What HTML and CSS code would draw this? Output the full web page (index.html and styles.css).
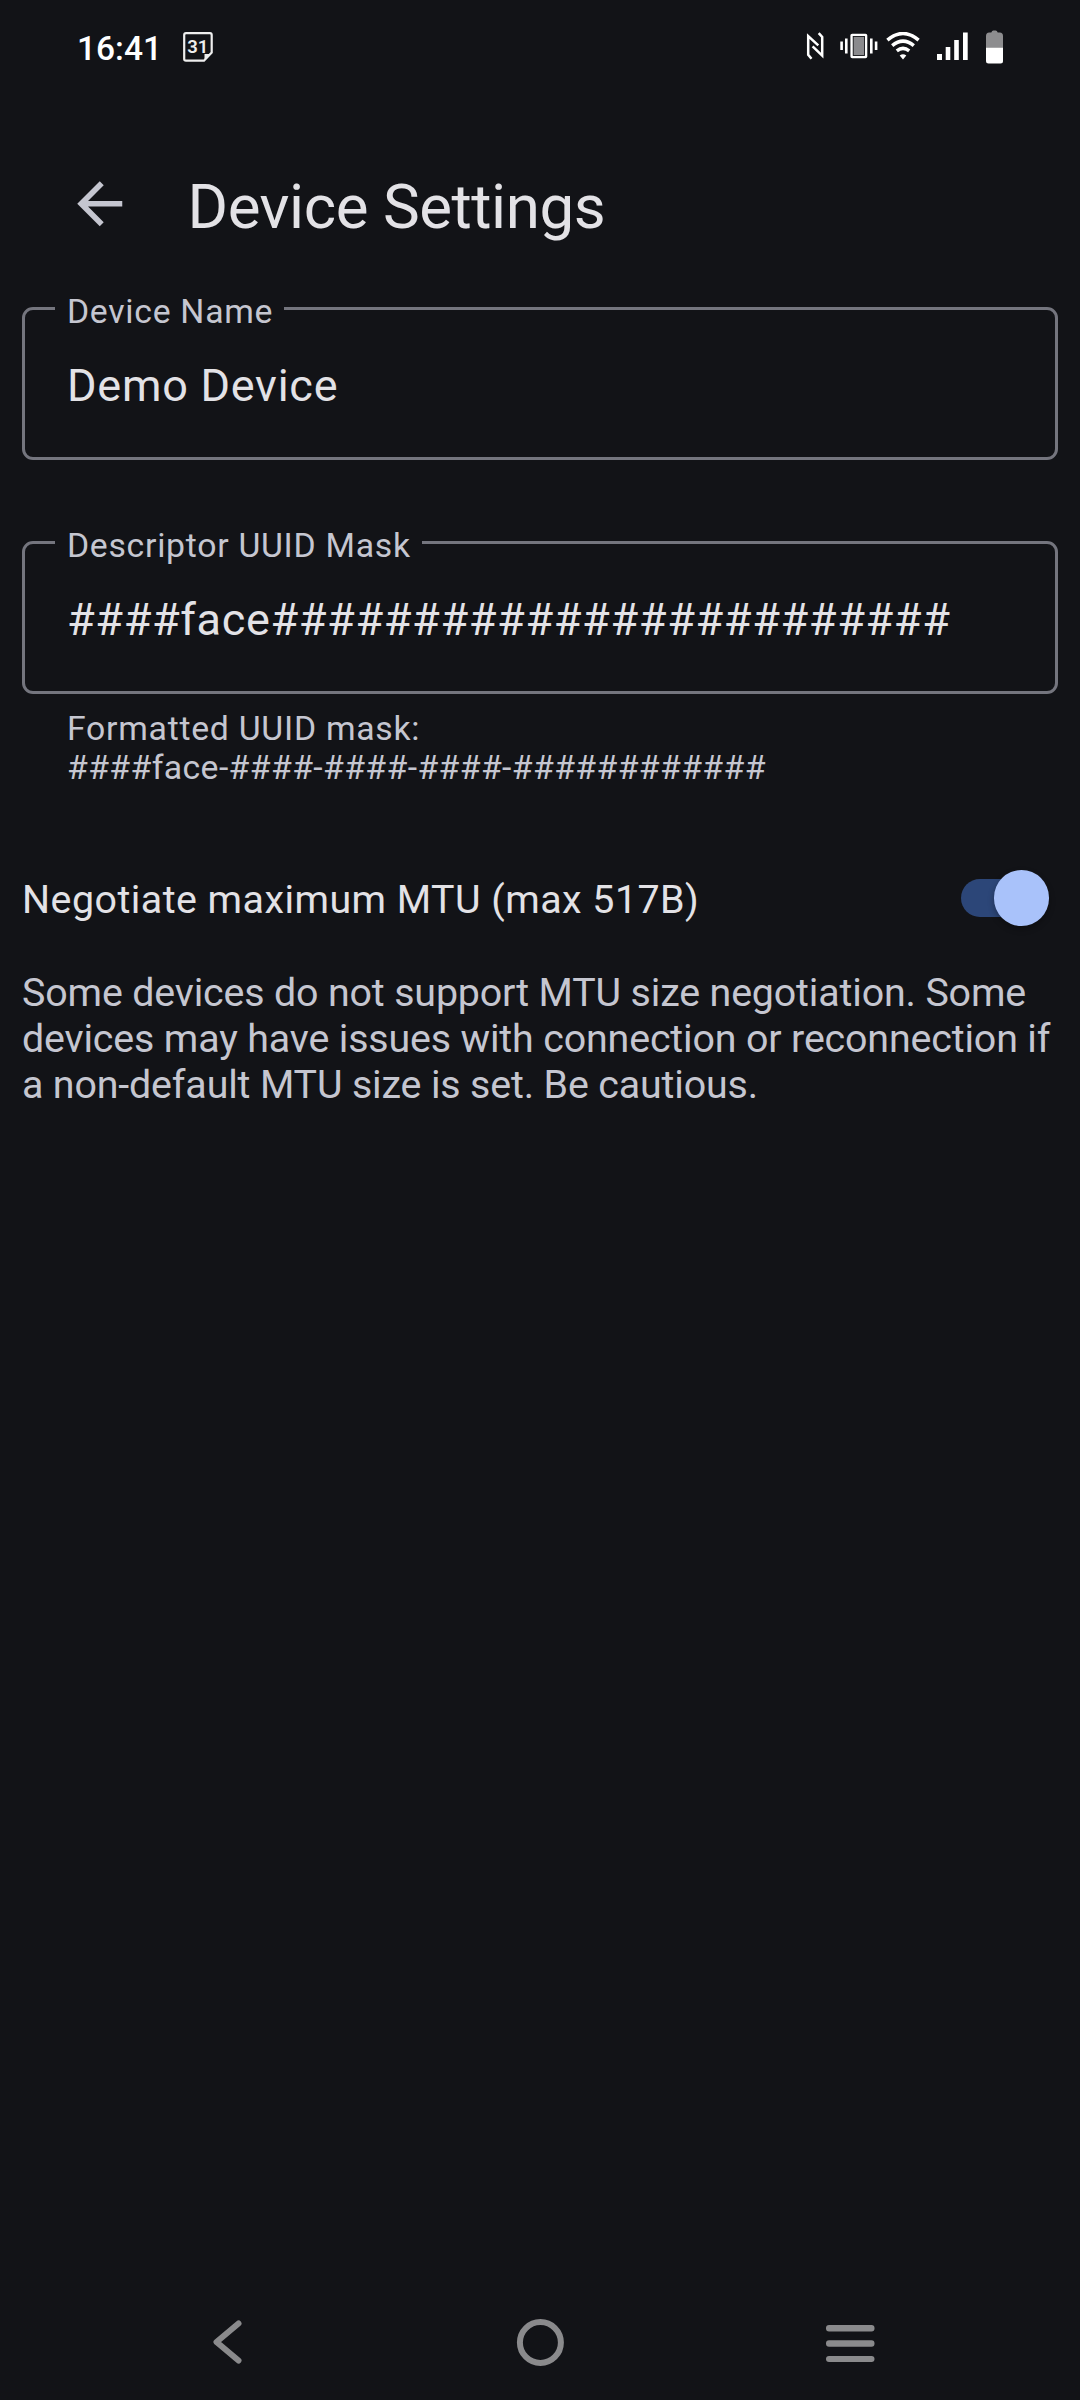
FILE: index.html
```
<!DOCTYPE html>
<html lang="en">
<head>
<meta charset="utf-8">
<title>Device Settings</title>
<link rel="stylesheet" href="styles.css">
</head>
<body>
<div class="screen">
  <div class="status">
    <span class="clock">16:41</span>
    <svg class="calendar" width="32" height="32" viewBox="0 0 32 32">
      <path d="M4 2.2H28Q29.7 2.2 29.7 4V21.5L22 29.7H4Q2.2 29.7 2.2 28V4Q2.2 2.2 4 2.2Z" fill="none" stroke="#eee" stroke-width="2.2"/>
      <path d="M22.5 29V23H29Z" fill="#eee"/>
      <text x="15.8" y="22.3" text-anchor="middle" class="day">31</text>
    </svg>
    <div class="indicators">
      <svg width="18" height="28" viewBox="0 0 18 28" fill="none" stroke="#fff" stroke-width="2.5">
        <path d="M5.5 26.8L2.2 22.8V4L12.3 13.4"/>
        <path d="M12.7 1.2L16.2 5V23.6L6.6 14.4"/>
      </svg>
      <svg class="vibrate" width="38" height="28" viewBox="0 0 38 28">
        <path d="M1.6 9.5V18M6.3 6.5V21.5M31.3 6.5V21.5M36.1 9.5V18" stroke="#fff" stroke-width="2.6"/>
        <rect x="11.7" y="3" width="14.3" height="22" rx=".5" fill="#8a8a8d" stroke="#fff" stroke-width="2.6"/>
        <rect x="13.2" y="4.5" width="11.3" height="19" fill="none" stroke="#17181b" stroke-width=".9"/>
      </svg>
      <svg class="wifi" width="34" height="28" viewBox="0 0 34 28" fill="none" stroke="#fff" stroke-width="3.5">
        <path d="M1.4 8.2Q17-5.2 32.6 8.2"/>
        <path d="M6.2 13.7Q17 4.6 27.8 13.7"/>
        <path d="M10.8 18.8Q17 13.9 23.2 18.8"/>
        <path d="M13.7 23.6Q17 21 20.3 23.6L17 27.6Z" fill="#fff" stroke="none"/>
      </svg>
      <svg class="signal" width="31" height="28" viewBox="0 0 31 28" fill="#fff">
        <path d="M0 22H5V28H0ZM8.7 15H13.3V28H8.7ZM17.2 8H21.8V28H17.2ZM26 .5H30.7V28H26Z"/>
      </svg>
      <svg class="battery" width="17" height="34" viewBox="0 0 17 34">
        <path d="M0 17.5V6Q0 2.6 3.2 2.4H5.3Q6 .6 7.3.6H9.7Q11 .6 11.7 2.4H13.8Q17 2.6 17 6V17.5Z" fill="#8d8d8f"/>
        <path d="M0 17.5H17V31Q17 33.5 14.5 33.5H2.5Q0 33.5 0 31Z" fill="#fff"/>
      </svg>
    </div>
  </div>

  <header class="appbar">
    <svg width="67.5" height="67.5" viewBox="0 0 24 24" fill="#c5c6d0">
      <path d="M20 11H7.83l5.59-5.59L12 4l-8 8 8 8 1.41-1.41L7.83 13H20v-2z"/>
    </svg>
    <h1 class="title">Device Settings</h1>
  </header>

  <main class="content">
    <fieldset class="field">
      <legend>Device Name</legend>
      <div class="value">Demo Device</div>
    </fieldset>
    <fieldset class="field field-mask">
      <legend>Descriptor UUID Mask</legend>
      <div class="value">####face########################</div>
    </fieldset>
    <div class="helper">Formatted UUID mask:<br><span class="mask">####face-####-####-####-############</span></div>

    <div class="setting">
      <span class="setting-label">Negotiate maximum MTU (max 517B)</span>
      <div class="switch"><div class="thumb"></div></div>
    </div>
    <p class="note">Some devices do not support MTU size negotiation. Some<br>devices may have issues with connection or reconnection if<br>a non-default MTU size is set. Be cautious.</p>
  </main>

  <nav class="navbar">
    <svg width="32" height="50" viewBox="0 0 32 50" fill="none" stroke="#8a8a8c" stroke-width="6" stroke-linecap="round" stroke-linejoin="round">
      <path d="M27.5 6.5L5.5 25L27.5 43.5"/>
    </svg>
    <svg class="home" width="50" height="50" viewBox="0 0 50 50" fill="none" stroke="#8a8a8c" stroke-width="6">
      <circle cx="25.4" cy="25.5" r="20.5"/>
    </svg>
    <svg width="50" height="50" viewBox="0 0 50 50" fill="#8a8a8c">
      <rect x="1" y="8" width="48.5" height="6.5" rx="3"/>
      <rect x="1" y="23.3" width="48.5" height="6.5" rx="3"/>
      <rect x="1" y="39" width="48.5" height="6" rx="3"/>
    </svg>
  </nav>
</div>
</body>
</html>
```
FILE: styles.css
```
body {
  margin: 0;
  background: #121317;
  font-family: Roboto, sans-serif;
  color: #e3e2e6;
}

svg {
  display: block;
  flex: none;
}

.screen {
  display: flex;
  flex-direction: column;
  height: 2400px;
}

.status {
  display: flex;
  box-sizing: border-box;
  height: 92px;
  padding: 31px 77px 0 77px;
  color: #fff;
}

.clock {
  width: 105px;
  padding-top: 1px;
  font-size: 33.5px;
  font-weight: 500;
  line-height: 34px;
}

.day {
  font-size: 18.5px;
  font-weight: 600;
  fill: #eee;
}

.indicators {
  display: flex;
  margin-left: auto;
  padding-top: 1px;
}

.vibrate {
  margin-left: 16px;
}

.wifi {
  margin-left: 8px;
}

.signal {
  margin-left: 17px;
}

.battery {
  margin: -2px 0 0 18px;
}

.appbar {
  display: flex;
  align-items: flex-start;
  height: 118px;
  padding: 78px 0 0 65.5px;
}

.title {
  margin: -3px 0 0 54.5px;
  font-size: 61.875px;
  font-weight: 400;
  line-height: 80px;
  letter-spacing: -.45px;
}

.content {
  flex: 1;
  padding: 0 22px;
}

.field {
  box-sizing: border-box;
  min-width: 0;
  height: 172px;
  margin: 0;
  padding: 27px 42px 0 30px;
  border: 3px solid #74757e;
  border-radius: 11px;
}

.field legend {
  padding: 7px 11px 0 12px;
  color: #c5c6d0;
  font-size: 33.75px;
  line-height: 34px;
  letter-spacing: .72px;
}

.value {
  padding-left: 12px;
  font-size: 45px;
  line-height: 60px;
  letter-spacing: .76px;
}

.field-mask {
  margin-top: 62px;
}

.field-mask .value {
  letter-spacing: .63px;
}

.helper {
  padding: 15px 0 0 45px;
  color: #c5c6d0;
  font-size: 33.75px;
  line-height: 39px;
  letter-spacing: .74px;
}

.mask {
  letter-spacing: .39px;
}

.setting {
  display: flex;
  align-items: center;
  justify-content: space-between;
  height: 56px;
  margin-top: 83px;
  padding-right: 9px;
}

.setting-label {
  padding-top: 3px;
  font-size: 39.375px;
  line-height: 46px;
  letter-spacing: .47px;
}

.switch {
  display: flex;
  align-items: center;
  justify-content: flex-end;
  width: 88px;
  height: 38px;
  border-radius: 19px;
  background: linear-gradient(90deg, #2c4678 70px, transparent 70px);
}

.thumb {
  width: 55.5px;
  height: 55.5px;
  flex: none;
  border-radius: 50%;
  background: #a9c2fa;
  box-shadow: 0 3px 6px rgba(0, 0, 0, .3);
}

.note {
  margin: 44px 0 0;
  color: #c5c6d0;
  font-size: 39.375px;
  line-height: 46px;
  letter-spacing: -.15px;
  white-space: nowrap;
}

.navbar {
  display: grid;
  grid-template-columns: 303px 311px 50px;
  height: 83px;
  padding-left: 211px;
}

.home {
  margin-left: 1px;
}
```
